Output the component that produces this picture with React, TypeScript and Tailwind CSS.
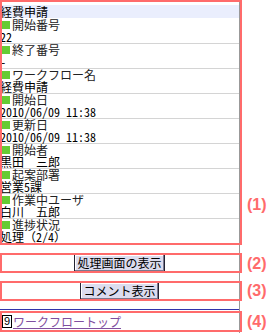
const items: { label: string; value: string }[] = [
  { label: '開始番号', value: '22' },
  { label: '終了番号', value: '-' },
  { label: 'ワークフロー名', value: '経費申請' },
  { label: '開始日', value: '2010/06/09 11:38' },
  { label: '更新日', value: '2010/06/09 11:38' },
  { label: '開始者', value: '黒田　三郎' },
  { label: '起案部署', value: '営業5課' },
  { label: '作業中ユーザ', value: '白川　五郎' },
  { label: '進捗状況', value: '処理（2/4）' },
];

function Mark({ n, className = '' }: { n: number; className?: string }) {
  return (
    <>
      <div className="pointer-events-none absolute left-0 top-0 h-full w-[242px] border-2 border-[#ff6b6b]" />
      <div
        className={`absolute left-[247px] font-['Liberation_Sans',sans-serif] text-[16px] font-bold leading-[16px] text-[#ff6b6b] ${className}`}
      >
        ({n})
      </div>
    </>
  );
}

function Btn({ children }: { children: string }) {
  return (
    <button className="mx-auto block h-[18px] border border-[#222233] bg-[#dcdcee] px-[2px] text-[12px] leading-[12px] text-black shadow-[inset_-1px_-1px_0_#7a7a90,inset_1px_1px_0_#ffffff]">
      {children}
    </button>
  );
}

export default function App() {
  return (
    <div className="relative h-[333px] w-[280px] overflow-hidden bg-white font-['Noto_Sans_Mono_CJK_JP','Noto_Sans_CJK_JP',monospace] text-[12px] leading-[12px] text-black">
      <div className="h-full w-[240px] border-r border-[#999999]">
        <section className="relative pb-px pt-[5px]">
          <div className="h-[13px] bg-[#eaeefd] pt-px">経費申請</div>
          <div className="mt-px">
            {items.map((item, i) => (
              <div
                key={item.label}
                className={`h-[25px] ${i < items.length - 1 ? 'border-b border-[#d4d4d4]' : ''}`}
              >
                <div className="flex h-[12px] items-center">
                  <span className="ml-[2px] mr-[2px] inline-block h-[8px] w-[8px] bg-[#66cc33]" />
                  <span className="text-[#222222]">{item.label}</span>
                </div>
                <div className="h-[12px]">{item.value}</div>
              </div>
            ))}
          </div>
          <Mark n={1} className="top-[197px]" />
        </section>

        <section className="relative mt-[8px] h-[20px] pt-px">
          <Btn>処理画面の表示</Btn>
          <Mark n={2} className="top-[3px]" />
        </section>

        <section className="relative mt-[8px] h-[20px] pt-px">
          <Btn>コメント表示</Btn>
          <Mark n={3} className="top-[2px]" />
        </section>

        <hr className="mt-[8px] border-0 border-t border-[#3333aa]" />

        <section className="relative mt-px flex h-[21px] items-center pl-[2px]">
          <span className="mr-px inline-flex h-[13px] w-[10px] items-center justify-center border border-black font-['Liberation_Sans',sans-serif] text-[11px] leading-none">
            9
          </span>
          <a href="#" className="text-[#7f4fa0] underline">
            ワークフロートップ
          </a>
          <Mark n={4} className="top-[3px]" />
        </section>
      </div>
    </div>
  );
}
